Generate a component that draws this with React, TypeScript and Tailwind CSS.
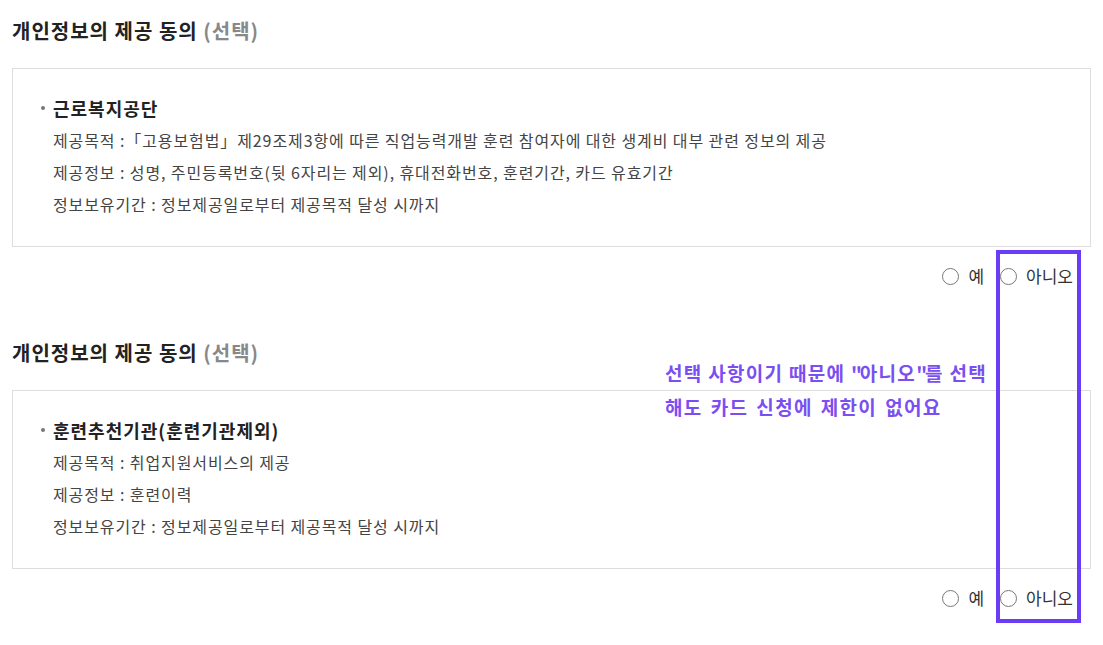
import React from "react";

const font = { fontFamily: '"Noto Sans CJK KR", "Noto Sans", sans-serif' };

function Radio({ label }: { label: string }) {
  return (
    <label className="flex items-center gap-[9px]">
      <span className="block w-[17px] h-[17px] rounded-full border border-[#777] bg-white" />
      <span className="text-[17px] text-[#333] leading-[28px]">{label}</span>
    </label>
  );
}

function Section({
  org,
  lines,
}: {
  org: string;
  lines: string[];
}) {
  return (
    <section>
      <h2 className="text-[20px] font-bold leading-[28px] tracking-[1px] text-[#222]">
        개인정보의 제공 동의 <span className="text-[#888]">(선택)</span>
      </h2>
      <div className="mt-[23px] border border-[#dddddd] pt-[23px] pb-[26px] pl-[26px]">
        <div className="flex items-center leading-[32px]">
          <span className="w-[4px] h-[4px] rounded-full bg-[#777] ml-[2px] mr-[8px]" />
          <span className="text-[18px] font-bold tracking-[1px] text-[#222]">{org}</span>
        </div>
        {lines.map((l) => (
          <p key={l} className="pl-[14px] text-[16px] tracking-[0.9px] leading-[32px] text-[#444]">
            {l}
          </p>
        ))}
      </div>
      <div className="flex justify-end items-center gap-[16px] pr-[18px] h-[28px] mt-[15px]">
        <Radio label="예" />
        <Radio label="아니오" />
      </div>
    </section>
  );
}

export default function App() {
  return (
    <div className="relative w-[1103px] h-[645px] bg-white overflow-hidden" style={font}>
      <div className="pl-[12px] pr-[12px] pt-[17px] flex flex-col gap-[49px]">
        <Section
          org="근로복지공단"
          lines={[
            "제공목적 :「고용보험법」제29조제3항에 따른 직업능력개발 훈련 참여자에 대한 생계비 대부 관련 정보의 제공",
            "제공정보 : 성명, 주민등록번호(뒷 6자리는 제외), 휴대전화번호, 훈련기간, 카드 유효기간",
            "정보보유기간 : 정보제공일로부터 제공목적 달성 시까지",
          ]}
        />
        <Section
          org="훈련추천기관(훈련기관제외)"
          lines={[
            "제공목적 : 취업지원서비스의 제공",
            "제공정보 : 훈련이력",
            "정보보유기간 : 정보제공일로부터 제공목적 달성 시까지",
          ]}
        />
      </div>

      {/* annotation overlay */}
      <div className="absolute left-[665px] top-[356px] text-[19px] font-bold leading-[34px] tracking-[1.3px] text-[#7b4ef2]">
        <p>
          선택 사항이기 때문에 <span className="tracking-[-2px]">"</span>아니오<span className="tracking-[-2px]">"</span>를 선택
        </p>
        <p className="[word-spacing:2.5px]">해도 카드 신청에 제한이 없어요</p>
      </div>
      <div className="absolute left-[996px] top-[250px] w-[85px] h-[373px] border-[4px] border-[#6a3cf5]" />
    </div>
  );
}
